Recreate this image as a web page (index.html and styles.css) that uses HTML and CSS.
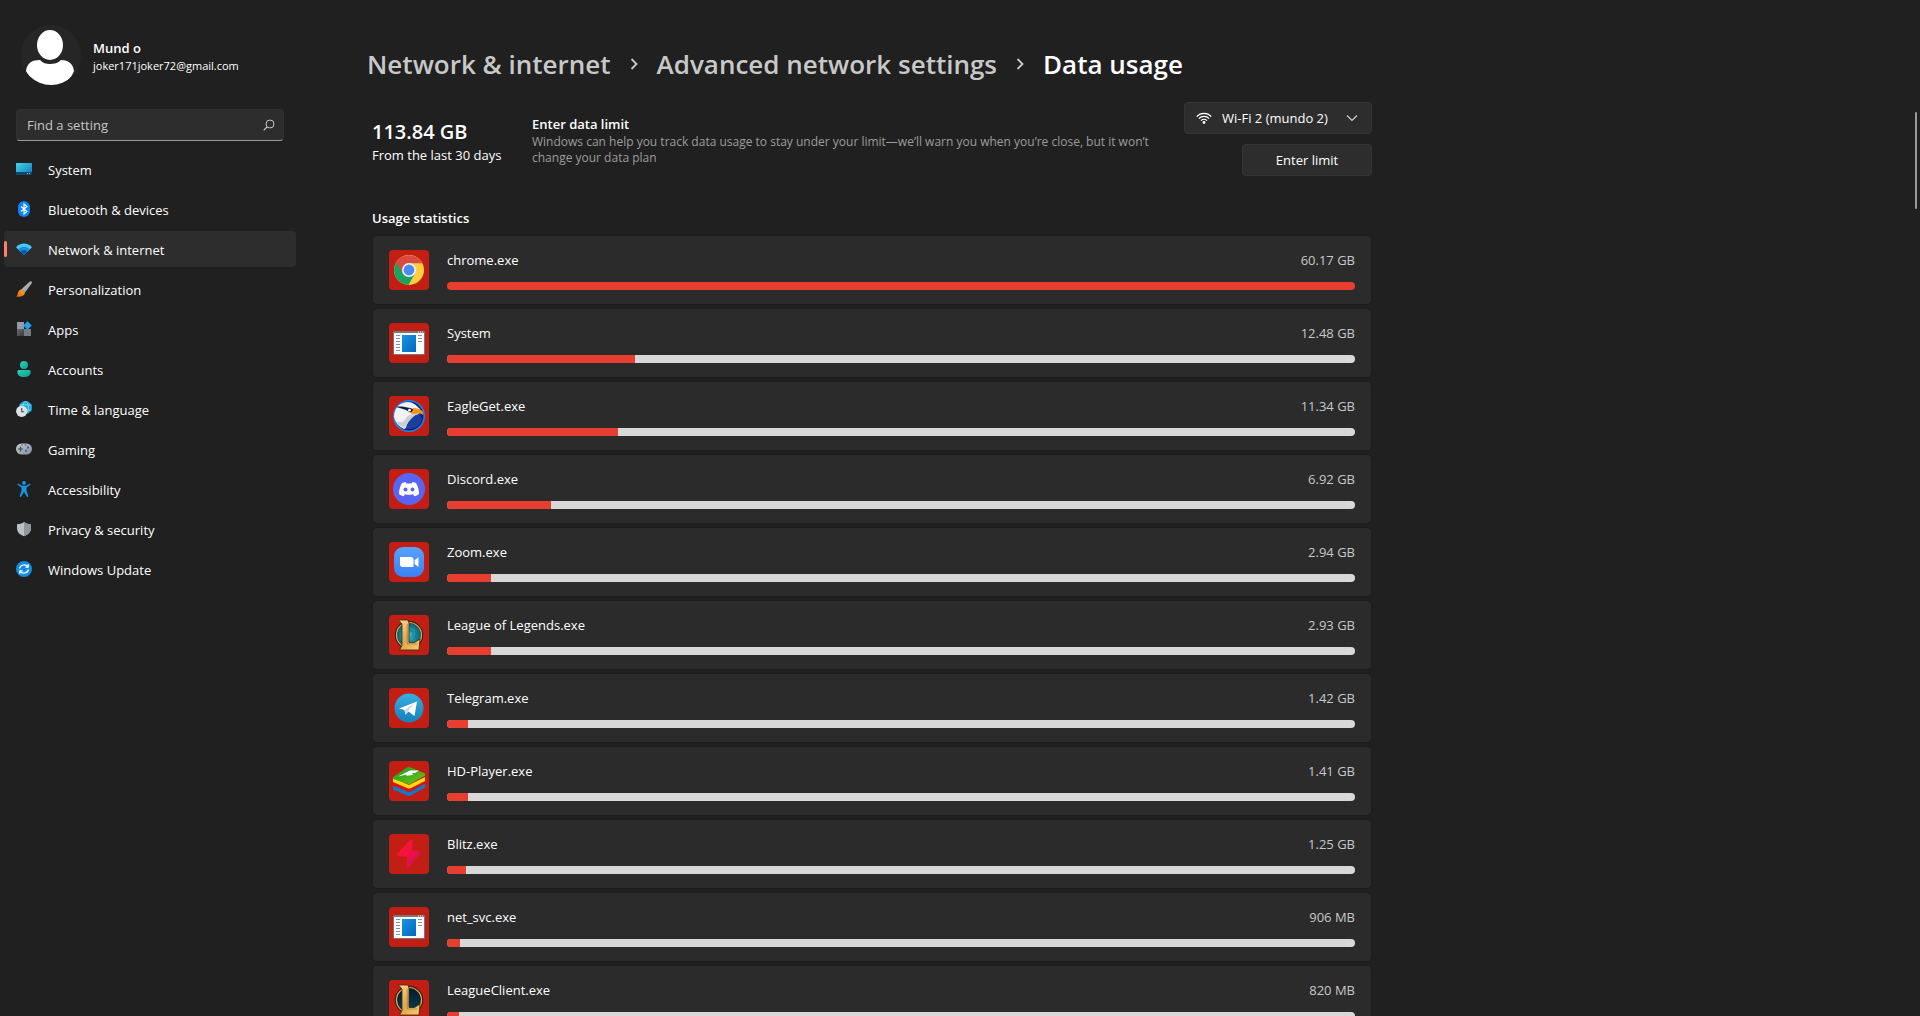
FILE: index.html
```html
<!DOCTYPE html>
<html lang="en">
<head>
<meta charset="utf-8">
<meta name="viewport" content="width=device-width, initial-scale=1">
<title>Settings - Data usage</title>
<link rel="stylesheet" href="styles.css">
</head>
<body>
<svg class="sprite" aria-hidden="true">
  <defs>
    <linearGradient id="g-screen" x1="0" y1="0" x2="1" y2="1"><stop offset="0" stop-color="#3fd8ea"/><stop offset="1" stop-color="#1272bd"/></linearGradient>
    <linearGradient id="g-blue" x1="0" y1="0" x2="1" y2="1"><stop offset="0" stop-color="#1694e6"/><stop offset="1" stop-color="#0667bb"/></linearGradient>
    <linearGradient id="g-teal" x1="0" y1="0" x2="1" y2="1"><stop offset="0" stop-color="#28d3b8"/><stop offset="1" stop-color="#129b8c"/></linearGradient>
    <linearGradient id="g-grey" x1="0" y1="0" x2="1" y2="1"><stop offset="0" stop-color="#c9ced4"/><stop offset="1" stop-color="#858a90"/></linearGradient>
    <linearGradient id="g-dark" x1="0" y1="0" x2="1" y2="1"><stop offset="0" stop-color="#686d73"/><stop offset="1" stop-color="#34383d"/></linearGradient>
    <linearGradient id="g-flame" x1="1" y1="0" x2="0" y2="1"><stop offset="0" stop-color="#ffb02e"/><stop offset="1" stop-color="#e25a12"/></linearGradient>
    <linearGradient id="g-zoom" x1="0" y1="0" x2="0" y2="1"><stop offset="0" stop-color="#58a2fb"/><stop offset="1" stop-color="#3a80f3"/></linearGradient>
    <linearGradient id="g-tele" x1="0" y1="0" x2="0" y2="1"><stop offset="0" stop-color="#37aee2"/><stop offset="1" stop-color="#1680ba"/></linearGradient>
    <linearGradient id="g-gold" x1="0" y1="0" x2="1" y2="1"><stop offset="0" stop-color="#fbdc8a"/><stop offset=".5" stop-color="#e0a750"/><stop offset="1" stop-color="#f6cd70"/></linearGradient>
    <linearGradient id="g-green" x1="0" y1="0" x2="1" y2="1"><stop offset="0" stop-color="#169c28"/><stop offset="1" stop-color="#74c313"/></linearGradient>
    <linearGradient id="g-bolt" x1="0" y1="0" x2="1" y2="1"><stop offset="0" stop-color="#ff0f31"/><stop offset=".45" stop-color="#f51240"/><stop offset="1" stop-color="#bf0f63"/></linearGradient>
    <radialGradient id="g-lol"><stop offset="0" stop-color="#35c6ca"/><stop offset="1" stop-color="#07566f"/></radialGradient>
    <linearGradient id="g-client" x1="0" y1="0" x2="0" y2="1"><stop offset="0" stop-color="#051a2b"/><stop offset="1" stop-color="#063c58"/></linearGradient>

    <symbol id="window" viewBox="0 0 32 32">
      <rect y="4" width="32" height="24" rx="1" fill="#777"/><rect x="1" y="6" width="30" height="21" fill="#fafafa"/>
      <path d="M25 5h1M27 5h1M29 5h1" stroke="#eee"/>
      <rect x="9" y="8" width="14" height="17" fill="url(#g-blue)"/>
      <path d="M3 8.500h4M3 11.500h4M3 14.500h4M3 17.500h4M3 20.500h4M3 23.500h4M25 8.500h4M25 11.500h4M25 14.500h4" stroke="#8d9298"/>
    </symbol>
    <symbol id="league-letter" viewBox="0 0 32 32">
      <path d="M5.500 1h9.500l1 3v19.500h5.500l5.500-3.500-1 11H6.500l2.500-4.500V5z" fill="url(#g-gold)" stroke="#3a2511" stroke-width=".8"/>
      <path d="M14.300 5v20h10" fill="none" stroke="#8d5a25" stroke-width=".8" opacity=".6"/>
    </symbol>
  </defs>
</svg>

<div class="page">
  <aside class="sidebar">
    <div class="profile">
      <svg class="avatar" viewBox="0 0 60 60" aria-hidden="true">
        <defs><clipPath id="avatar-clip"><circle cx="30" cy="30" r="30"/></clipPath></defs>
        <circle cx="30" cy="30" r="30" fill="#262626"/>
        <g clip-path="url(#avatar-clip)" fill="#fff"><ellipse cx="29" cy="20" rx="13" ry="15"/><path d="M5 46c1-8 6-11 14-11 3 3 6 4 10 4s8-1 11-4c8 0 12 4 13 11-4 11-14 15-23 15S9 57 5 46z"/></g>
      </svg>
      <div class="profile-text">
        <div class="profile-name">Mund o</div>
        <div class="profile-mail">joker171joker72@gmail.com</div>
      </div>
    </div>

    <form class="search" role="search">
      <input type="text" aria-label="Find a setting" placeholder="Find a setting">
      <button type="button" aria-label="Search"><svg viewBox="0 0 12 12" aria-hidden="true"><circle cx="7" cy="5" r="4" fill="none" stroke="#c6c6c6"/><path d="M4 8 .7 11.300" stroke="#c6c6c6" stroke-width="1.200"/></svg></button>
    </form>

    <nav class="menu" aria-label="Settings">
      <a href="#system"><svg viewBox="0 0 16 16" aria-hidden="true"><rect y="2" width="16" height="12" rx=".6" fill="url(#g-screen)"/><path d="M0 11h16v2.400a.6.6 0 0 1-.6.600H.6a.6.600 0 0 1-.6-.600z" fill="#0e4568"/><path d="M11 12.500h1M13 12.500h1" stroke="#8fd3f0"/></svg>System</a>
      <a href="#bluetooth"><svg viewBox="0 0 16 16" aria-hidden="true"><rect x="2" width="12" height="16" rx="6" fill="#0a84f5"/><path d="m5 5.500 6 5L8 13V3l3 2.500-6 5" fill="none" stroke="#fff" stroke-width="1.100"/></svg>Bluetooth &amp; devices</a>
      <a href="#network" class="current" aria-current="page"><svg viewBox="0 0 16 16" aria-hidden="true"><path d="M0 6.200C4.500 1.300 11.500 1.300 16 6.200L8 14z" fill="#48c9f5"/><path d="M2.200 8.300C5.500 5 10.500 5 13.800 8.300L8 14z" fill="#1490e2"/><path d="M4.600 10.700c2-1.800 4.800-1.800 6.800 0L8 14z" fill="#0f56a8"/></svg>Network &amp; internet</a>
      <a href="#personalization"><svg viewBox="0 0 16 16" aria-hidden="true"><path d="M15.500.5c.8.8.4 1.500-.2 2.500L9 11.500 5.500 8.200 13 1.200c1-.8 1.700-1.300 2.500-.7z" fill="url(#g-grey)"/><path d="M5.500 8.200 9 11.500c-.6 3.500-4.500 4.800-8.800 4.200C2.500 14 .8 9.300 5.500 8.200z" fill="url(#g-flame)"/></svg>Personalization</a>
      <a href="#apps"><svg viewBox="0 0 16 16" aria-hidden="true"><path d="M1 1h7v7H1z" fill="#929ba6"/><path d="M1 8h7v7H1z" fill="url(#g-dark)"/><path d="M8 8h7v7H8z" fill="#737b84"/><path d="m11.500.2 4.300 4.300-4.300 4.300-4.300-4.300z" fill="#1fa2ee"/></svg>Apps</a>
      <a href="#accounts"><svg viewBox="0 0 16 16" aria-hidden="true"><circle cx="8" cy="4" r="4" fill="url(#g-teal)"/><path d="M3 9h10c1 0 1.700.7 1.700 1.700C14.700 14 12 16 8 16s-6.700-2-6.700-5.300C1.300 9.700 2 9 3 9z" fill="url(#g-teal)"/></svg>Accounts</a>
      <a href="#time"><svg viewBox="0 0 16 16" aria-hidden="true"><circle cx="9.500" cy="6.500" r="6.500" fill="#23a9df"/><path d="M9.500 0c-4 4-4 9 0 13 4-4 4-9 0-13zM3.500 4h12M3.500 9h12" fill="none" stroke="#7fe3f4" stroke-width=".8"/><circle cx="5.700" cy="10.300" r="5.600" fill="#dfe2e5"/><path d="M5.700 7v3.800h2.600" fill="none" stroke="#44494f" stroke-width="1.100"/></svg>Time &amp; language</a>
      <a href="#gaming"><svg viewBox="0 0 16 16" aria-hidden="true"><rect y="2.500" width="16" height="11" rx="5.500" fill="url(#g-grey)"/><path d="M2 8h5M4.500 5.500v5M5.500 4h1.200M8.700 4h1.500" stroke="#44494f" stroke-width="1.100"/><path d="M11 5.500h2v2h-2zM9 8.800h2v2H9z" fill="#1473ca"/></svg>Gaming</a>
      <a href="#accessibility"><svg viewBox="0 0 16 16" aria-hidden="true"><circle cx="8" cy="1.900" r="1.900" fill="#1597e8"/><path d="M2.500 2.800 6 4.800h4l3.500-2c1-.3 1.300.7.6 1.200L10.500 6.500v3.200l1.800 5.300c.1 1-1 1.300-1.500.5L8 10.800l-2.800 4.700c-.5.800-1.600.5-1.500-.5l1.800-5.300V6.500L1.900 4c-.7-.5-.4-1.500.6-1.200z" fill="#1597e8"/></svg>Accessibility</a>
      <a href="#privacy"><svg viewBox="0 0 16 16" aria-hidden="true"><path d="M8 1c2 1.500 4.300 2.200 7 2.200V7c0 4-2.500 6.500-7 8.200C3.500 13.500 1 11 1 7V3.200C3.700 3.200 6 2.500 8 1z" fill="#bcc1c7"/><path d="M8 1c2 1.500 4.300 2.200 7 2.200V7c0 4-2.500 6.500-7 8.200z" fill="#92979d"/></svg>Privacy &amp; security</a>
      <a href="#update"><svg viewBox="0 0 16 16" aria-hidden="true"><circle cx="8" cy="8" r="8" fill="#148ce0"/><path d="M3.500 7.500C4.500 3.500 9.500 2.700 12 5.700M12.200 3.200v2.900H9.400M12.500 8.500c-1 4-6 4.800-8.500 1.800M3.800 12.800V9.900h2.800" fill="none" stroke="#fff" stroke-width="1.200"/></svg>Windows Update</a>
    </nav>
  </aside>

  <main class="content">
    <header class="breadcrumb">
      <a href="#network">Network &amp; internet</a>
      <svg viewBox="0 0 8 12" aria-hidden="true"><path d="m1.500 1 5 5-5 5" fill="none" stroke="#c8c8c8" stroke-width="1.800"/></svg>
      <a href="#advanced">Advanced network settings</a>
      <svg viewBox="0 0 8 12" aria-hidden="true"><path d="m1.500 1 5 5-5 5" fill="none" stroke="#c8c8c8" stroke-width="1.800"/></svg>
      <h1>Data usage</h1>
    </header>

    <section class="summary">
      <div class="total">
        <div class="total-value">113.84 GB</div>
        <div>From the last 30 days</div>
      </div>
      <div class="limit">
        <h2>Enter data limit</h2>
        <p>Windows can help you track data usage to stay under your limit—we’ll warn you when you’re close, but it won’t change your data plan</p>
      </div>
      <div class="actions">
        <div class="picker">
          <svg class="picker-wifi" viewBox="0 0 16 12" aria-hidden="true"><path d="M.7 4.600c4-4.400 10.600-4.400 14.600 0M2.800 6.700c2.900-3 7.500-3 10.400 0M5 8.700c1.700-1.700 4.300-1.700 6 0" fill="none" stroke="#fff" stroke-width="1.200"/><circle cx="8" cy="10.500" r="1.400" fill="#fff"/></svg>
          <select aria-label="Network"><option>Wi-Fi 2 (mundo 2)</option></select>
          <svg class="picker-arrow" viewBox="0 0 12 8" aria-hidden="true"><path d="m1 1.500 5 5 5-5" fill="none" stroke="#d0d0d0" stroke-width="1.200"/></svg>
        </div>
        <button class="limit-button" type="button">Enter limit</button>
      </div>
    </section>

    <section>
      <h2 class="list-title">Usage statistics</h2>
      <ul class="usage">
        <li><span class="tile"><svg viewBox="0 0 32 32" aria-hidden="true"><circle cx="16" cy="16" r="15" fill="#ffcd40"/><path d="M16 16 3 8.500A15 15 0 0 0 15.500 31L22 19.500z" fill="#1aa260"/><path d="M3 8.500A15 15 0 0 1 29 9.200H16L10 19.500z" fill="#db4a3f"/><circle cx="16" cy="16" r="7" fill="#f1f1f1"/><circle cx="16" cy="16" r="5.400" fill="#4b8bf5"/></svg></span>
          <div class="stat"><div class="stat-line"><label for="u1">chrome.exe</label><span>60.17 GB</span></div><progress id="u1" max="60.17" value="60.17"></progress></div></li>
        <li><span class="tile"><svg aria-hidden="true"><use href="#window"/></svg></span>
          <div class="stat"><div class="stat-line"><label for="u2">System</label><span>12.48 GB</span></div><progress id="u2" max="60.17" value="12.48"></progress></div></li>
        <li><span class="tile"><svg viewBox="0 0 32 32" aria-hidden="true"><circle cx="16" cy="16" r="15.200" fill="#071c72" stroke="#1689f4" stroke-width="1.600"/><path d="M27 13c-6 1-12 6-14 16 5 1 13-1 16-9" fill="#1c3f9d"/><path d="M26 14c-6 1-11 5-13 14l-2 1c-5-2-9-7-10-12C1 7 8 2 15 2c5 0 8 3 12 7l-2 4-10-1z" fill="#f1f3f4"/><path d="M3 22c5-1 5 3 10-4 3-4 8-5 14-5-6 2-11 7-15 15-4-1-7-3-9-6z" fill="#cbd0d4"/><path d="M3 7c4-1 9 0 14 1l3 1v3c-3 1-5-1-7-2-3-1-6-2-10-3z" fill="#111c49"/><circle cx="16.500" cy="10.200" r="1.400" fill="#fff"/><path d="M20 8c4 0 8 1 10 4v3c-2-2-5-2-9-1-2 0-4-1-5-2 3 1 4-1 4-4z" fill="#f79414"/></svg></span>
          <div class="stat"><div class="stat-line"><label for="u3">EagleGet.exe</label><span>11.34 GB</span></div><progress id="u3" max="60.17" value="11.34"></progress></div></li>
        <li><span class="tile"><svg viewBox="0 0 32 32" aria-hidden="true"><circle cx="16" cy="16" r="16" fill="#5865f2"/><path d="M12.500 9 9 10c-2 3-3 7-3 11 2 1.500 3 2 4.700 2.300l1.300-2c3 .7 5 .7 8 0l1.300 2C23 23 24 22.500 26 21c0-4-1-8-3-11l-3.500-1-1 1.500h-5z" fill="#fff"/><circle cx="12.500" cy="16.500" r="2" fill="#5865f2"/><circle cx="19.500" cy="16.500" r="2" fill="#5865f2"/></svg></span>
          <div class="stat"><div class="stat-line"><label for="u4">Discord.exe</label><span>6.92 GB</span></div><progress id="u4" max="60.17" value="6.92"></progress></div></li>
        <li><span class="tile"><svg viewBox="0 0 32 32" aria-hidden="true"><rect x="1" y="1" width="30" height="30" rx="9" fill="url(#g-zoom)"/><path d="M7 11h11c1.500 0 2.500 1 2.500 2.500V21h-11C8 21 7 20 7 18.500zM21.500 14.300l4-3V21l-4-3z" fill="#fff"/></svg></span>
          <div class="stat"><div class="stat-line"><label for="u5">Zoom.exe</label><span>2.94 GB</span></div><progress id="u5" max="60.17" value="2.94"></progress></div></li>
        <li><span class="tile"><svg viewBox="0 0 32 32" aria-hidden="true"><circle cx="16" cy="16" r="13" fill="url(#g-lol)" stroke="#33210f" stroke-width="2.400"/><circle cx="16" cy="16" r="12.500" fill="none" stroke="#e0b45c" stroke-width="1.200"/><path d="M17 8c8-1 8 9 3 12M17 12c4 0 4 4 1 6M23 9c2 4 2 8 0 11" fill="none" stroke="#0d7c8e"/><use href="#league-letter"/></svg></span>
          <div class="stat"><div class="stat-line"><label for="u6">League of Legends.exe</label><span>2.93 GB</span></div><progress id="u6" max="60.17" value="2.93"></progress></div></li>
        <li><span class="tile"><svg viewBox="0 0 32 32" aria-hidden="true"><circle cx="16" cy="16" r="14.500" fill="url(#g-tele)"/><path d="M6 16.500 24 9.500 21.500 24l-6-4.500-3 3-1-4.500z" fill="#fff"/><path d="m11.500 18 10-7-6.500 8-2.500 3.500z" fill="#c8daea"/></svg></span>
          <div class="stat"><div class="stat-line"><label for="u7">Telegram.exe</label><span>1.42 GB</span></div><progress id="u7" max="60.17" value="1.42"></progress></div></li>
        <li><span class="tile"><svg viewBox="0 0 32 32" aria-hidden="true"><path d="M0 20.500v4l14 6q2 1 4 0l14-8v-4l-16 8z" fill="#1479c4"/><path d="M0 17v3.500l14 6q2 1 4 0l14-8V15l-16 8z" fill="#d5141f"/><path d="M0 13v4l14 6q2 1 4 0l14-7v-4l-16 8z" fill="#ffdc0a"/><path d="M0 12 14 2.500q2-1 4 0L32 8.500v2l-14 8q-2 1-4 0L0 14z" fill="url(#g-green)"/><path d="m5 11.500 12-6h9l-4 2.500h-3l1 2-7 .8 1-1.300z" fill="#fff"/></svg></span>
          <div class="stat"><div class="stat-line"><label for="u8">HD-Player.exe</label><span>1.41 GB</span></div><progress id="u8" max="60.17" value="1.41"></progress></div></li>
        <li><span class="tile"><svg viewBox="0 0 32 32" aria-hidden="true"><path d="M17 2c1.500-1 3 0 2.500 1.500L19 12l7.500 1c1.500.2 1.500 1.500.7 2.500L16 29.500c-1.500 1.500-3 .5-2.500-1.500l.5-9-8.500-1c-1.500-.3-2-1.500-1-2.700z" fill="url(#g-bolt)"/></svg></span>
          <div class="stat"><div class="stat-line"><label for="u9">Blitz.exe</label><span>1.25 GB</span></div><progress id="u9" max="60.17" value="1.25"></progress></div></li>
        <li><span class="tile"><svg aria-hidden="true"><use href="#window"/></svg></span>
          <div class="stat"><div class="stat-line"><label for="u10">net_svc.exe</label><span>906 MB</span></div><progress id="u10" max="60.17" value="0.88"></progress></div></li>
        <li><span class="tile"><svg viewBox="0 0 32 32" aria-hidden="true"><circle cx="16" cy="16" r="13" fill="url(#g-client)" stroke="#33210f" stroke-width="2.400"/><circle cx="16" cy="16" r="12.500" fill="none" stroke="#e0b45c" stroke-width="1.200"/><use href="#league-letter"/></svg></span>
          <div class="stat"><div class="stat-line"><label for="u11">LeagueClient.exe</label><span>820 MB</span></div><progress id="u11" max="60.17" value="0.80"></progress></div></li>
      </ul>
    </section>
  </main>
  <div class="scroll-thumb"></div>
</div>
</body>
</html>
```
FILE: styles.css
```css
* { box-sizing: border-box; }

body {
  margin: 0;
  background: #202020;
  color: #fff;
  font: 13px/20px "Open Sans", "Noto Sans", sans-serif;
}

h1, h2, p, ul { margin: 0; padding: 0; }
a { color: inherit; text-decoration: none; }
svg { display: block; flex: none; }
button, input, select { font: inherit; color: inherit; }

.sprite { position: absolute; width: 0; height: 0; }

.page {
  position: relative;
  display: flex;
  height: 100vh;
  overflow: hidden;
}

/* Sidebar */
.sidebar { flex: none; width: 300px; padding: 25px 4px 0; }

.profile { display: flex; align-items: center; gap: 12px; padding-left: 17px; }
.avatar { width: 60px; height: 60px; }
.profile-text { padding-top: 3px; }
.profile-name { font-weight: 600; line-height: 18px; }
.profile-mail { font-size: 11px; line-height: 18px; }

.search {
  display: flex;
  align-items: center;
  height: 32px;
  margin: 24px 12px 10px;
  padding: 0 8px 0 10px;
  background: #2d2d2d;
  border: 1px solid #303030;
  border-bottom-color: #9a9a9a;
  border-radius: 4px;
}
.search input { flex: 1; min-width: 0; padding: 0; background: none; border: 0; outline: 0; }
.search input::placeholder { color: #c6c6c6; opacity: 1; }
.search button { padding: 0; background: none; border: 0; }
.search svg { width: 12px; height: 12px; }

.menu { display: flex; flex-direction: column; gap: 4px; }
.menu a {
  position: relative;
  display: flex;
  align-items: center;
  gap: 16px;
  height: 36px;
  padding: 2px 0 0 12px;
  border-radius: 4px;
}
.menu svg { width: 16px; height: 16px; margin-bottom: 2px; }
.menu .current { background: #2d2d2d; }
.menu .current::before {
  content: "";
  position: absolute;
  left: 0;
  top: 10px;
  width: 3px;
  height: 16px;
  border-radius: 2px;
  background: #ff8266;
}

/* Main column */
.content { flex: 1; min-width: 0; max-width: 1072px; padding: 46px 0 0 72px; }

.breadcrumb {
  display: flex;
  align-items: center;
  gap: 19px;
  margin-left: -5px;
  color: #c8c8c8;
  font-size: 26px;
  font-weight: 600;
  line-height: 36px;
  white-space: nowrap;
}
.breadcrumb svg { width: 8px; height: 12px; }
.breadcrumb h1 { color: #fff; font: inherit; }

.summary {
  display: grid;
  grid-template-columns: 160px minmax(0, 632px) 1fr;
  margin: 20px 0 32px;
}
.total { padding-top: 17px; }
.total-value { font-size: 20px; font-weight: 600; line-height: 26px; }
.limit { padding-top: 12px; }
.limit h2, .list-title { font-size: 13px; font-weight: 600; line-height: 20px; }
.limit p { color: #9d9d9d; font-size: 12px; line-height: 16px; }
.actions { display: flex; flex-direction: column; align-items: flex-end; gap: 10px; }

.picker { position: relative; }
.picker select, .limit-button {
  display: block;
  height: 32px;
  background: #2d2d2d;
  border: 1px solid #343434;
  border-radius: 4px;
}
.picker select { width: 188px; padding: 0 32px 0 37px; appearance: none; }
.picker svg { position: absolute; pointer-events: none; }
.picker-wifi { left: 12px; top: 10px; width: 16px; height: 12px; }
.picker-arrow { right: 14px; top: 12px; width: 12px; height: 8px; }
.limit-button { width: 130px; padding: 0; }

/* Usage list */
.usage { display: flex; flex-direction: column; gap: 3px; margin-top: 7px; list-style: none; }
.usage li {
  display: flex;
  gap: 18px;
  padding: 14px 16px;
  background: #2b2b2b;
  border: 1px solid #1d1d1d;
  border-radius: 5px;
}
.tile {
  display: grid;
  place-items: center;
  flex: none;
  width: 40px;
  height: 40px;
  border-radius: 4px;
  background: #c31e14;
}
.tile svg { width: 32px; height: 32px; }
.stat { display: flex; flex: 1; flex-direction: column; justify-content: space-between; }
.stat-line { display: flex; justify-content: space-between; }
.stat-line span { color: #c8c8c8; }

progress {
  display: block;
  width: 100%;
  height: 8px;
  border: 0;
  border-radius: 4px;
  overflow: hidden;
  background: #d8d8d8;
  appearance: none;
}
progress::-webkit-progress-bar { background: #d8d8d8; }
progress::-webkit-progress-value { background: #e83e2f; }

.scroll-thumb {
  position: absolute;
  right: 3px;
  top: 112px;
  width: 2px;
  height: 97px;
  border-radius: 1px;
  background: #9a9a9a;
}
```
